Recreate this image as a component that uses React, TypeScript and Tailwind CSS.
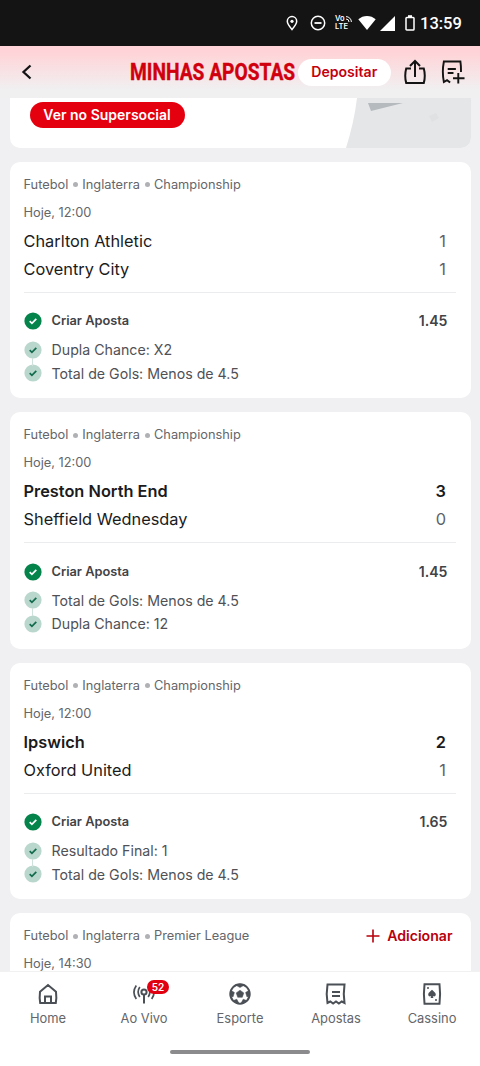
import { ReactNode } from "react"
import clsx from "clsx"

type Team = { name: string; score: number }

type Bet = {
  league: string
  time: string
  teams: Team[]
  odds: string
  selections: string[]
}

const bets: Bet[] = [
  {
    league: "Championship",
    time: "Hoje, 12:00",
    teams: [
      { name: "Charlton Athletic", score: 1 },
      { name: "Coventry City", score: 1 },
    ],
    odds: "1.45",
    selections: ["Dupla Chance: X2", "Total de Gols: Menos de 4.5"],
  },
  {
    league: "Championship",
    time: "Hoje, 12:00",
    teams: [
      { name: "Preston North End", score: 3 },
      { name: "Sheffield Wednesday", score: 0 },
    ],
    odds: "1.45",
    selections: ["Total de Gols: Menos de 4.5", "Dupla Chance: 12"],
  },
  {
    league: "Championship",
    time: "Hoje, 12:00",
    teams: [
      { name: "Ipswich", score: 2 },
      { name: "Oxford United", score: 1 },
    ],
    odds: "1.65",
    selections: ["Resultado Final: 1", "Total de Gols: Menos de 4.5"],
  },
]

function StatusBar() {
  return (
    <div className="flex h-[46px] shrink-0 items-center bg-[#141414] pl-[285px] text-white">
      <svg className="h-4 w-[14px]" viewBox="0 0 14 16" fill="none" stroke="currentColor" strokeWidth="1.5">
        <path d="M7 14.5C4 11 2.3 8.600 2.300 6.300a4.700 4.700 0 0 1 9.400 0C11.700 8.600 10 11 7 14.500Z" />
        <circle cx="7" cy="6.300" r="1.600" fill="currentColor" stroke="none" />
      </svg>
      <svg className="ml-[11px] size-4" viewBox="0 0 16 16" fill="none" stroke="currentColor" strokeWidth="1.5">
        <circle cx="8" cy="8" r="6.700" />
        <path d="M4.500 8h7" strokeWidth="1.800" />
      </svg>
      <div className="ml-[9px] flex w-[17px] flex-col text-[7.500px] font-semibold leading-[8px]">
        <span className="flex items-center">
          Vo
          <svg className="ml-px size-[6px]" viewBox="0 0 6 6" fill="none" stroke="currentColor" strokeWidth="1">
            <path d="M0 .6a5.400 5.400 0 0 1 5.400 5.400M0 3a3 3 0 0 1 3 3" />
          </svg>
        </span>
        <span>LTE</span>
      </div>
      <svg className="ml-[6px] h-[14px] w-[18px]" viewBox="0 0 18 14" fill="currentColor">
        <path d="M9 14 .3 3.300C2.800 1.200 5.800 0 9 0s6.200 1.200 8.700 3.300Z" />
      </svg>
      <svg className="ml-[4px] size-[15px]" viewBox="0 0 15 15" fill="currentColor">
        <path d="M15 0v15H0Z" />
      </svg>
      <svg className="ml-[9.500px] h-4 w-[10px]" viewBox="0 0 10 16" fill="none" stroke="currentColor" strokeWidth="1.500">
        <rect x="1" y="2.500" width="8" height="12.500" rx="0.800" />
        <path d="M3 1.200h4" strokeWidth="2" />
      </svg>
      <span className="ml-[5.500px] mt-[3px] font-['Roboto',sans-serif] text-[16.500px] font-medium leading-none">13:59</span>
    </div>
  )
}

function Header() {
  return (
    <header className="flex h-[52px] shrink-0 items-center bg-linear-to-b from-[#ffd3d7] from-10% to-[#f0f0f1] to-85% pl-5">
      <svg className="size-4" viewBox="0 0 16 16" fill="none" stroke="#141414" strokeWidth="2.300">
        <path d="m10.500 1.500-7 6.500 7 6.500" />
      </svg>
      <h1 className="ml-[94px] w-[167.500px] whitespace-nowrap font-['Roboto',sans-serif] text-[23px] font-bold leading-none text-[#d0000f]">
        <span className="inline-block origin-left scale-x-[0.835] [-webkit-text-stroke:0.400px_#d0000f]">MINHAS APOSTAS</span>
      </h1>
      <button className="h-[27px] w-[93.500px] shrink-0 rounded-full bg-white text-[14.100px] font-semibold text-[#c4000e]">
        Depositar
      </button>
      <svg className="ml-[13px] h-[26px] w-[22px] shrink-0" viewBox="0 0 22 26" fill="none" stroke="#141414" strokeWidth="2">
        <path d="M7 9.500H2.200C1 14 1 19.500 2.200 24h17.600c1.200-4.500 1.200-10 0-14.500H15" />
        <path d="M11 18V2M6 7l5-5 5 5" />
      </svg>
      <svg className="ml-[15px] h-[26px] w-[24px] shrink-0" viewBox="0 0 25 26" fill="none" stroke="#141414" strokeWidth="2">
        <path d="M20.800 13C20.900 9 20.700 5.500 20.200 2H3C1.700 8.500 1.700 17 3 23.500l3.300-2 3.200 2.500" />
        <path d="M7 9.800h8.500M7 14h6M18 14v11M12.500 19.500h12" />
      </svg>
    </header>
  )
}

function SocialBanner() {
  return (
    <section className="flex h-[49.500px] shrink-0 overflow-hidden rounded-b-[10px] bg-white">
      <button className="ml-5 mt-1 h-[26px] w-[155px] shrink-0 rounded-full bg-[#e5000f] text-[14px] font-semibold leading-none text-white">
        Ver no Supersocial
      </button>
      <svg className="ml-auto h-[50px] w-[125px]" viewBox="0 0 125 50">
        <path d="M11 0h114v50H0C5 34 9 17 11 0Z" fill="#e5e6e8" />
        <path d="M22 5h35L25 13Z" fill="#b5babf" />
        <path d="m83 18 7-3 3 5-7 4Z" fill="#dfe1e3" />
      </svg>
    </section>
  )
}

function Meta({ league, children }: { league: string; children?: ReactNode }) {
  return (
    <div className="flex h-7 items-center text-[12.800px] text-[#64666a]">
      Futebol
      <span className="mx-[4.500px] size-[5px] rounded-full bg-[#b0b1b4]" />
      Inglaterra
      <span className="mx-[4.500px] size-[5px] rounded-full bg-[#b0b1b4]" />
      {league}
      {children}
    </div>
  )
}

function Check({ muted }: { muted?: boolean }) {
  return (
    <svg className="size-[18px] shrink-0" viewBox="0 0 18 18" fill="none">
      <circle cx="9" cy="9" r="8.600" fill={muted ? "#b9d7cd" : "#04834b"} />
      <path d="m5.700 9.200 2.200 2.200 4.400-4.500" stroke={muted ? "#126b4c" : "#fff"} strokeWidth="1.700" />
    </svg>
  )
}

function BetCard({ bet }: { bet: Bet }) {
  const best = Math.max(...bet.teams.map((t) => t.score))
  const draw = bet.teams[0].score === bet.teams[1].score

  return (
    <article className="h-[236.500px] shrink-0 rounded-[10px] bg-white pl-[14px] pr-[14.500px] pt-[9px]">
      <Meta league={bet.league} />
      <div className="flex h-7 items-center text-[12.800px] text-[#64666a]">{bet.time}</div>
      <div className="mt-[0.500px]">
        {bet.teams.map((team) => {
          const winner = !draw && team.score === best
          return (
            <div key={team.name} className="flex h-7 items-center justify-between pr-[10px] text-[16.350px] text-[#1b1b1d]">
              <span className={clsx(winner && "font-semibold")}>{team.name}</span>
              <span className={winner ? "font-semibold" : "text-[#606266]"}>{team.score}</span>
            </div>
          )
        })}
      </div>
      <div className="mt-[8.500px] h-px bg-[#ebecee]" />
      <div className="mt-[14.500px] flex h-7 items-center pr-[8.500px] font-semibold text-[#424347]">
        <Check />
        <span className="ml-[10px] text-[12.800px]">Criar Aposta</span>
        <span className="ml-auto text-[14.100px]">{bet.odds}</span>
      </div>
      <ul className="mt-[3px]">
        {bet.selections.map((selection, i) => (
          <li key={selection} className="relative flex h-[23.500px] items-center text-[14.200px] text-[#505156]">
            {i > 0 && <span className="absolute -top-[4px] left-[8.500px] h-2 w-px bg-[#cfe3dc]" />}
            <Check muted />
            <span className="ml-[10px]">{selection}</span>
          </li>
        ))}
      </ul>
    </article>
  )
}

const tabs: { label: string; icon: ReactNode; badge?: number }[] = [
  {
    label: "Home",
    icon: (
      <path d="M4 9.800 12 3l8 6.800c.5 4 .5 7.500-.2 11.200H4.200C3.500 17.300 3.500 13.800 4 9.800ZM9 21v-6.500h6V21" />
    ),
  },
  {
    label: "Ao Vivo",
    badge: 52,
    icon: (
      <>
        <circle cx="12" cy="10" r="2.600" />
        <path d="M12 12.600v9" />
        <path
          d="M7.800 5c-2 3-2 7 0 10M4.300 3.500c-2.900 4.200-2.900 9.400 0 13.500M16.200 5c2 3 2 7 0 10M19.700 3.500c2.900 4.200 2.900 9.400 0 13.500"
          strokeWidth="1.700"
        />
      </>
    ),
  },
  {
    label: "Esporte",
    icon: (
      <>
        <circle cx="12" cy="12" r="9.700" />
        <path
          d="m12 8.200 3.800 2.700-1.500 4.400H9.700l-1.500-4.400ZM7.500 3 12 5.500 16.500 3 12 2ZM2.600 8l3.800 2.500L5 15l-2.600-1ZM21.400 8l-3.800 2.500L19 15l2.600-1ZM5.500 18.500l3.300-1.300 2 3.800-1.800.5ZM18.500 18.500l-3.300-1.300-2 3.800 1.800.5Z"
          fill="currentColor"
          strokeWidth="0.500"
        />
      </>
    ),
  },
  {
    label: "Apostas",
    icon: (
      <path d="M3.500 2.500h17c-.9 6-.9 12.500 0 18.500l-2.800-1.500-2.800 2-2.900-2-2.900 2-2.800-2L3.500 21c-1-6-1-12.500 0-18.500ZM8 10h8M8 14h8" />
    ),
  },
  {
    label: "Cassino",
    icon: (
      <>
        <path d="M4.500 2.300h15c.8 6.500.8 13 0 19.400h-15c-.8-6.400-.8-12.900 0-19.400Z" />
        <path d="M12 7.800c1.200 1.500 3.800 2.700 3.800 4.700 0 1.800-1.900 2.400-3 1.400l.6 2h-2.800l.6-2c-1.100 1-3 .4-3-1.400 0-2 2.600-3.200 3.800-4.700Z" fill="currentColor" stroke="none" />
        <circle cx="8" cy="6" r="1" fill="currentColor" stroke="none" />
        <circle cx="16" cy="18" r="1" fill="currentColor" stroke="none" />
      </>
    ),
  },
]

function BottomNav() {
  return (
    <nav className="flex h-[95px] shrink-0 flex-col items-center border-t border-[#f1f1f2] bg-white">
      <div className="grid w-full grid-cols-5 pt-[10px] text-[#4b5056]">
        {tabs.map((tab) => (
          <div key={tab.label} className="relative flex flex-col items-center">
            <svg className="size-6" viewBox="0 0 24 24" fill="none" stroke="currentColor" strokeWidth="2">
              {tab.icon}
            </svg>
            <span className="mt-[3px] text-[12.900px] leading-5 text-[#64666a]">{tab.label}</span>
            {tab.badge && (
              <span className="absolute left-[51px] -top-[2px] flex h-[14px] w-[22px] items-center justify-center rounded-full bg-[#e0000f] text-[10px] font-semibold text-white">
                {tab.badge}
              </span>
            )}
          </div>
        ))}
      </div>
      <div className="mt-[21px] h-1 w-[140px] rounded-full bg-[#8b8b8d]" />
    </nav>
  )
}

export default function App() {
  return (
    <div className="flex h-[1066px] w-[480px] flex-col overflow-hidden bg-[#f0f0f2] font-['Inter',sans-serif]">
      <StatusBar />
      <Header />
      <main className="flex min-h-0 flex-1 flex-col gap-[14px] overflow-hidden pl-[9.500px] pr-[9.500px]">
        <SocialBanner />
        {bets.map((bet, i) => (
          <BetCard key={i} bet={bet} />
        ))}
        <article className="h-[120px] shrink-0 rounded-t-[10px] bg-white px-[14px] pt-[9px]">
          <Meta league="Premier League">
            <button className="ml-auto mr-1 flex items-center gap-[7px] text-[14.100px] font-semibold text-[#b8000d]">
              <svg className="size-[14px]" viewBox="0 0 14 14" fill="none" stroke="currentColor" strokeWidth="1.600">
                <path d="M7 .5v13M.5 7h13" />
              </svg>
              Adicionar
            </button>
          </Meta>
          <div className="flex h-7 items-center text-[12.800px] text-[#64666a]">Hoje, 14:30</div>
        </article>
      </main>
      <BottomNav />
    </div>
  )
}
